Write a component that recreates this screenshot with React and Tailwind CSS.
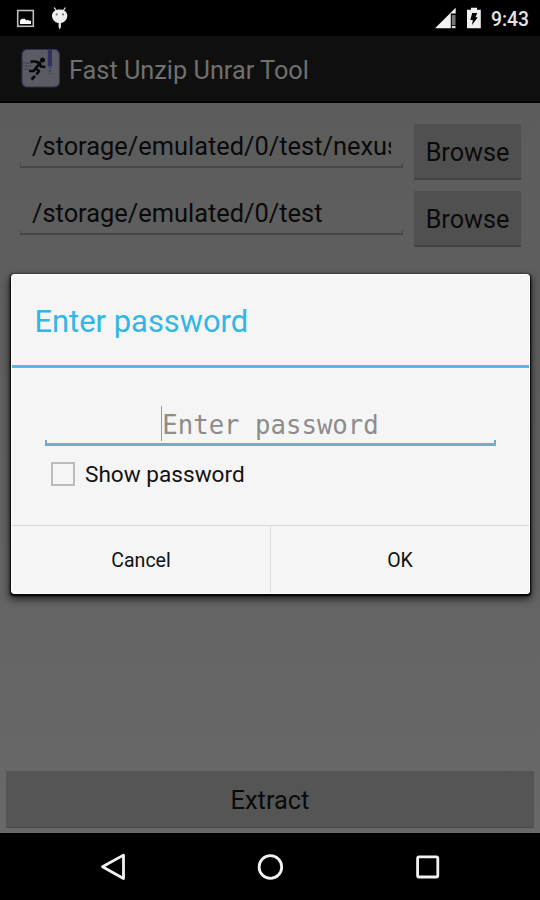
import React, { useState } from "react";

const StatusBar = () => {
  return (
    <div className="flex h-9 shrink-0 items-center justify-between bg-black">
      <div className="flex items-center">
        <svg className="ml-4 h-[22px] w-[20px]" viewBox="0 0 20 22">
          <title>picture</title>
          <rect x="1.7" y="3.5" width="15.6" height="15.8" fill="none" stroke="#bdbdbd" strokeWidth="1.6" />
          <path d="M4 17v-3.6l1.8-1.6h3l1.6 1.8 1.6-.9 1.3 1h1.7V17z" fill="#fff" />
        </svg>
        <svg className="ml-[15px] h-[24px] w-[18px]" viewBox="0 0 18 24">
          <title>android</title>
          <path d="M3.2 1.5l2.4 3.6M14.4 1.5L12 5.1" stroke="#ddd" strokeWidth="1.3" />
          <path
            d="M1 9C1.8 5.4 5 3.6 8.7 3.6s6.9 1.8 7.6 5.4c.4 4.2-3 7.6-6.4 8v4l-1.2 2.400-1.100-2.400v-4C4 16.600.600 13.200 1 9z"
            fill="#eee"
          />
          <circle cx="5.7" cy="8.4" r="1.1" fill="#777" />
          <circle cx="12" cy="8.4" r="1.1" fill="#777" />
        </svg>
      </div>
      <div className="flex items-center pr-[11px]">
        <svg className="h-[22px] w-[22px]" viewBox="0 0 22 22">
          <title>signal</title>
          <path d="M0 21.2L20.7.8v5.7h-4.9v14.7z" fill="#f2f2f2" />
          <path d="M16.8 8h3.7v10.2h-3.7z" fill="#777" />
          <path d="M16.8 19h3.7v2.2h-3.7z" fill="#ddd" />
        </svg>
        <svg className="ml-[9px] h-[22px] w-[16px]" viewBox="0 0 16 22">
          <title>battery</title>
          <path d="M1 2.8h4V.8h6v2h3.8v18.4H1z" fill="#f0f0f0" />
          <path d="M6.2 6h5L9.5 10.2h2.3L6 18l.8-5H4.3z" fill="#000" />
        </svg>
        <span className="ml-[9px] pt-[3px] text-[19.3px] leading-none font-medium text-[#e4e4e4]">9:43</span>
      </div>
    </div>
  );
};

const AppIcon = () => {
  return (
    <svg className="h-10 w-10" viewBox="0 0 40 40">
      <title>app icon</title>
      <rect x="1" y="0.5" width="37.5" height="37.5" rx="5" fill="#5b5c63" stroke="#30305a" strokeWidth="1.2" />
      <path d="M26.8.5H31v17h-4.2z" fill="#30305f" />
      <path d="M28.9 18v7" stroke="#41416d" strokeWidth="2.5" strokeDasharray="2 1" />
      <path d="M2 14h9M2 17h8M3 20h5" stroke="#3f4145" strokeWidth="1" />
      <circle cx="21.5" cy="11" r="2.5" fill="#080808" />
      <path
        d="M9.5 12.5H14l5 1.500-4.500 5.500 3.500 2.500-2.500 3.500M14.500 19.500l-2 2.500H8M18.500 13.500l1.300 4 4.500.5M14 27l-3.500 3.500"
        fill="none"
        stroke="#080808"
        strokeWidth="2.7"
        strokeLinejoin="round"
      />
    </svg>
  );
};

// text field with the small upturned ends of the holo theme
const PathField = ({ value }) => {
  return (
    <div className="flex h-[44px] w-[383px] flex-col justify-between">
      <div className="ml-3 h-[38px] w-[359px] shrink-0 overflow-hidden pt-[4px] text-[25.4px] leading-[36px] whitespace-nowrap text-[#0a0a0a]">
        {value}
      </div>
      <div className="h-[5px] shrink-0 border-x border-b-2 border-[#474747]"></div>
    </div>
  );
};

const BrowseButton = () => {
  return (
    <button className="h-[56px] w-[107px] border-b-2 border-[#434343] bg-[#505050] pt-[4px] text-[25.2px] leading-none text-[#0a0a0a]">
      Browse
    </button>
  );
};

const PasswordDialog = () => {
  const [show, setShow] = useState(false);

  return (
    <div className="absolute top-[274px] left-[11px] flex h-[320px] w-[519px] flex-col rounded-[3px] border border-white bg-[#f5f5f5] shadow-[0_1px_2px_1px_#000,0_4px_9px_1px_rgba(0,0,0,0.7)]">
      <h2 className="h-[90px] pt-[27px] pl-[22.5px] text-[30.9px] leading-[40px] text-[#33b5e5]">
        Enter password
      </h2>
      <div className="h-[3px] shrink-0 bg-[#5bb8df]"></div>
      <div className="flex flex-1 flex-col pl-[33px]">
        <div className="mt-[37px] flex h-[36px] w-[450px] items-center justify-center">
          <div className="h-[35px] w-px bg-[#999]"></div>
          <span className="pt-[3px] font-['DejaVu_Sans_Mono',monospace] text-[25.7px] leading-[36px] text-[#8c8c8c]">
            Enter password
          </span>
        </div>
        <div className="-mt-px h-[6px] w-[451px] border-x-2 border-b-[3px] border-[#6aaed6]"></div>
        <label className="mt-[16px] ml-[6px] flex items-center">
          <span className="-mt-[2px] h-[24px] w-[24px] border-2 border-[#bcbcbc]" onClick={() => setShow(!show)}></span>
          <span className="ml-[10px] text-[22.6px] leading-[26px] text-[#111]">Show password</span>
        </label>
      </div>
      <div className="flex h-[68px] shrink-0 border-t border-[#d6d6d6] text-[19.5px] text-[#111]">
        <button className="w-[259px] border-r border-[#dedede] pt-[3px]">Cancel</button>
        <button className="flex-1 pt-[3px]">OK</button>
      </div>
    </div>
  );
};

const NavBar = () => {
  return (
    <div className="flex h-[67px] shrink-0 items-center justify-between bg-black px-[99px]">
      <svg className="h-[30px] w-[28px]" viewBox="0 0 28 30" fill="none" stroke="#f2f2f2" strokeWidth="2.8">
        <title>back</title>
        <path d="M3.5 14.8L24.5 3.1v23.4z" strokeLinejoin="round" />
      </svg>
      <svg className="h-[30px] w-[30px]" viewBox="0 0 30 30" fill="none" stroke="#f2f2f2" strokeWidth="2.8">
        <title>home</title>
        <circle cx="15.4" cy="15" r="11.3" />
      </svg>
      <svg className="h-[30px] w-[28px]" viewBox="0 0 28 30" fill="none" stroke="#f2f2f2" strokeWidth="2.8">
        <title>recent</title>
        <rect x="4.6" y="4.8" width="20.2" height="20.2" rx="1.5" />
      </svg>
    </div>
  );
};

const App = () => {
  return (
    <div className="relative flex h-[900px] w-[540px] flex-col overflow-hidden bg-black font-[Roboto,sans-serif]">
      <StatusBar />
      <header className="flex h-[67px] shrink-0 items-center border-b-2 border-black bg-[#0f0f0f] pl-[21px]">
        <AppIcon />
        <h1 className="ml-2 pt-[5px] text-[25.3px] text-[#707070]">Fast Unzip Unrar Tool</h1>
      </header>
      <main className="flex flex-1 flex-col justify-between bg-linear-to-b from-[#5c5c5c] to-[#686868]">
        <div className="flex flex-col gap-[11px] pt-[21px] pl-5">
          <div className="flex gap-[11px]">
            <PathField value="/storage/emulated/0/test/nexus" />
            <BrowseButton />
          </div>
          <div className="flex gap-[11px]">
            <PathField value="/storage/emulated/0/test" />
            <BrowseButton />
          </div>
        </div>
        <button className="mx-[6px] mb-[5px] h-[57px] border-b border-[#4a4a4a] bg-[#555] pt-[2px] text-[25.4px] text-[#0a0a0a]">
          Extract
        </button>
      </main>
      <NavBar />
      <PasswordDialog />
    </div>
  );
};

export default App;
